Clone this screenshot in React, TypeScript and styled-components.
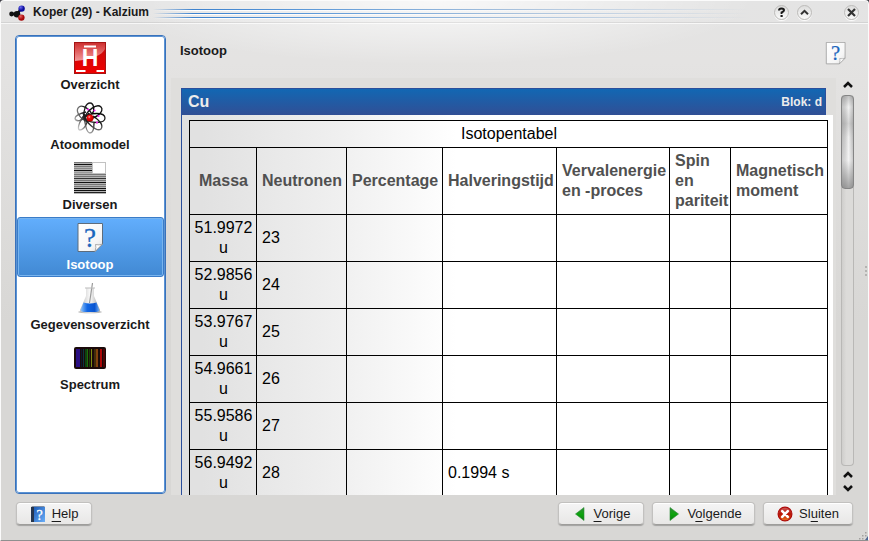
import React from "react";
import styled, { createGlobalStyle, css } from "styled-components";

const GlobalStyle = createGlobalStyle`
  *, *::before, *::after { box-sizing: border-box; }
  body {
    margin: 0;
    font-family: "Liberation Sans", Arial, sans-serif;
    font-size: 13px;
    color: #1a1a1a;
  }
  button { font: inherit; color: inherit; }
`;

const Backdrop = styled.div`
  background: #3c3c44;
`;

const Window = styled.div`
  position: relative;
  display: flex;
  flex-direction: column;
  height: 100vh;
  border: 1px solid #fbfbfb;
  border-bottom: 1px solid #8f8f8f;
  border-radius: 4px 4px 0 0;
  background:
    radial-gradient(ellipse 320px 64px at 50% 0, rgba(255, 255, 255, 0.75), rgba(255, 255, 255, 0)),
    linear-gradient(#e4e4e4 0, #e4e3e2 60px, #d8d7d5 320px);
`;

const TitleBar = styled.header`
  display: flex;
  align-items: center;
  flex: none;
  height: 23px;
  padding: 0 9px 0 8px;
  border-bottom: 1px solid rgba(255, 255, 255, 0.7);
  box-shadow: inset 0 -1px 0 rgba(0, 0, 0, 0.07);
`;

const WindowTitle = styled.h1`
  margin: 0 4px 0 7px;
  font-size: 12px;
  line-height: 16px;
  font-weight: bold;
  white-space: nowrap;
`;

const TitleLines = styled.div`
  flex: 1;
  display: flex;
  flex-direction: column;
  gap: 2px;
  margin-right: 24px;
  padding-top: 4px;
`;

const TitleLine = styled.div`
  height: 2px;
  background:
    linear-gradient(90deg, rgba(61, 130, 206, 0), #3d82ce 40px, #5b98d8 25%, #a6c0dc 60%, rgba(180, 195, 215, 0)) 0 0 / 100% 1px no-repeat,
    linear-gradient(90deg, rgba(255, 255, 255, 0), #ffffff 40px, rgba(255, 255, 255, 0)) 0 1px / 100% 1px no-repeat;
`;

const TitleButtons = styled.div`
  display: flex;
  gap: 8px;
`;

const RoundButton = styled.button<{ $apart?: boolean }>`
  display: grid;
  place-items: center;
  width: 15px;
  height: 15px;
  margin-left: ${(p) => (p.$apart ? "24px" : "0")};
  padding: 0;
  border: 1px solid #bcbbb9;
  border-radius: 50%;
  background: linear-gradient(#dddddc, #fafafa);
  box-shadow: 0 1px 1px #ffffff;
`;

const Main = styled.main`
  display: flex;
  flex: 1;
  min-height: 0;
  padding: 11px 14px 0;
`;

const Sidebar = styled.nav`
  flex: none;
  width: 151px;
  margin-bottom: 1px;
  border: 1px solid #3972bb;
  outline: 1px solid #5b93d4;
  outline-offset: -2px;
  border-radius: 4px;
  padding: 1px;
  background: #ffffff;
`;

const SideItem = styled.button<{ $active?: boolean }>`
  display: flex;
  flex-direction: column;
  align-items: center;
  gap: 3px;
  width: 100%;
  height: 60px;
  padding: 4px 1px 4px 0;
  border: 1px solid transparent;
  border-radius: 3px;
  background: transparent;
  font-weight: bold;
  line-height: 15px;
  ${(p) =>
    p.$active &&
    css`
      color: #ffffff;
      border-color: #3a7cc8;
      background: linear-gradient(#62aefd, #4189d3);
      box-shadow: inset 0 0 0 1px #78b4ee;
    `}
`;

const Page = styled.section`
  display: flex;
  flex-direction: column;
  flex: 1;
  min-width: 0;
  margin-left: 5px;
`;

const PageHeader = styled.div`
  display: flex;
  justify-content: space-between;
  flex: none;
  height: 43px;
  padding: 7px 7px 0 9px;
`;

const PageTitle = styled.h2`
  margin: 0;
  font-size: 13px;
  line-height: 17px;
`;

const ScrollArea = styled.div`
  display: flex;
  flex: 1;
  min-height: 0;
`;

const Viewport = styled.div`
  flex: 1;
  min-width: 0;
  overflow: hidden;
  padding: 10px 3px 0 10px;
  background: #dfdedc;
`;

const Banner = styled.div`
  display: flex;
  align-items: center;
  justify-content: space-between;
  height: 27px;
  margin-right: 7px;
  padding: 0 3px 0 6px;
  border: 1px solid #2b4f9c;
  border-bottom: 0;
  background: linear-gradient(#1267b3, #314f95);
  color: #ececec;
  font-weight: bold;
`;

const ElementSymbol = styled.span`
  font-size: 16px;
  line-height: 20px;
`;

const Block = styled.span`
  font-size: 12px;
  line-height: 16px;
`;

const Sheet = styled.div`
  border-left: 1px solid #2b4f9c;
  padding: 5px 5px 0 7px;
  background: linear-gradient(90deg, #e1e1e1 20px, #f0f0f0 160px, #ffffff 275px);
`;

const IsotopeTable = styled.table`
  width: 100%;
  table-layout: fixed;
  border-collapse: collapse;
  font-size: 16px;
  line-height: 20px;
  color: #000000;
`;

const Col = styled.col<{ $w?: number }>`
  width: ${(p) => (p.$w ? `${p.$w}px` : "auto")};
`;

const cell = css`
  padding: 3px 3px 3px 5px;
  border: 1px solid #000000;
  vertical-align: middle;
`;

const centredCell = css`
  padding-left: 4px;
  text-align: center;
`;

const Caption = styled.th`
  ${cell}
  ${centredCell}
  font-weight: normal;
`;

const Heading = styled.th<{ $center?: boolean }>`
  ${cell}
  color: #505050;
  text-align: left;
  ${(p) => p.$center && centredCell}
`;

const Cell = styled.td<{ $center?: boolean }>`
  ${cell}
  ${(p) => p.$center && centredCell}
`;

const ScrollBar = styled.div`
  display: flex;
  flex-direction: column;
  flex: none;
  width: 13px;
  margin-left: 5px;
  padding-bottom: 1px;
`;

const ScrollArrow = styled.button`
  display: grid;
  place-items: center;
  flex: none;
  height: 13px;
  padding: 0;
  border: 0;
  background: transparent;
`;

const Track = styled.div`
  flex: 1;
  margin: 4px 0 2px;
  border: 1px solid #b9b8b6;
  border-top: 0;
  border-radius: 4px;
  background: linear-gradient(90deg, #cfcecc, #dcdbd9 40%, #dcdbd9);
`;

const Thumb = styled.div`
  height: 94px;
  margin: 0 -1px;
  border: 1px solid #858585;
  border-radius: 4px;
  background:
    linear-gradient(rgba(150, 150, 150, 0.5), rgba(255, 255, 255, 0.2) 12%, rgba(150, 150, 150, 0.3) 30%, rgba(255, 255, 255, 0.1) 45%, rgba(255, 255, 255, 0.3) 70%, rgba(130, 130, 130, 0.7)),
    linear-gradient(90deg, #b4b4b4, #c8c8c8 30%, #eeeeee 60%, #b4b4b4);
`;

const Footer = styled.footer`
  display: flex;
  align-items: flex-start;
  flex: none;
  gap: 8px;
  height: 45px;
  padding: 7px 15px 0;
`;

const PushButton = styled.button<{ $w: number; $first?: boolean }>`
  display: flex;
  align-items: center;
  justify-content: center;
  gap: 6px;
  min-width: ${(p) => p.$w}px;
  height: 23px;
  margin-right: ${(p) => (p.$first ? "auto" : "0")};
  padding: 0;
  border: 1px solid #c2c1bf;
  border-bottom-color: #9e9d9b;
  border-radius: 4px;
  background: linear-gradient(#f5f5f5, #e8e7e6);
  box-shadow: 0 1px 1px rgba(0, 0, 0, 0.25), inset 0 1px 0 #ffffff;
  line-height: 16px;
`;

const Mnemonic = styled.span`
  text-decoration: underline;
  text-decoration-thickness: 1px;
  text-underline-offset: 3px;
`;

const CornerGrip = styled.svg`
  position: absolute;
  right: 0;
  bottom: 0;
`;

const EdgeGrip = styled.svg`
  position: absolute;
  right: 0;
  top: 50%;
  transform: translateY(-50%);
`;

const Chevron = ({ down }: { down?: boolean }) => (
  <svg width="12" height="8" viewBox="0 0 12 8" aria-hidden="true">
    <path d={down ? "M2 2 L6 6 L10 2" : "M2 6 L6 2 L10 6"} fill="none" stroke="#111" strokeWidth="2.5" />
  </svg>
);

const MoleculeIcon = () => (
  <svg width="17" height="17" viewBox="0 0 17 17" aria-hidden="true">
    <defs>
      <radialGradient id="molBlue" cx=".35" cy=".3"><stop offset="0" stopColor="#6a6af0" /><stop offset="1" stopColor="#0c0c9c" /></radialGradient>
      <radialGradient id="molRed" cx=".35" cy=".3"><stop offset="0" stopColor="#e86060" /><stop offset="1" stopColor="#a80808" /></radialGradient>
    </defs>
    <path d="M3 10 L8 10 L12 5 M8 10 L12 14" stroke="#111" strokeWidth="2.4" fill="none" />
    <circle cx="2.600" cy="10" r="2.400" fill="#111" />
    <circle cx="8" cy="10.300" r="3.300" fill="#111" />
    <circle cx="12.600" cy="4.600" r="3.200" fill="url(#molBlue)" />
    <circle cx="12.400" cy="13.600" r="3.200" fill="url(#molRed)" />
  </svg>
);

const OverviewIcon = () => (
  <svg width="32" height="32" viewBox="0 0 32 32" aria-hidden="true">
    <defs>
      <linearGradient id="ovRed" x1="0" y1="0" x2="0" y2="1"><stop offset="0" stopColor="#c40d0d" /><stop offset="1" stopColor="#ef0000" /></linearGradient>
      <linearGradient id="ovGloss" x1="0" y1="0" x2="0" y2="1"><stop offset="0" stopColor="#fff" stopOpacity=".15" /><stop offset="1" stopColor="#fff" stopOpacity=".6" /></linearGradient>
    </defs>
    <rect x=".5" y=".5" width="31" height="31" fill="url(#ovRed)" stroke="#a51515" />
    <path d="M1 1 H31 V7 Q27 16 1 19 Z" fill="url(#ovGloss)" />
    <path d="M10 4.500 H22 M2 29 H11.500 M22.500 29 H30" stroke="#fff" strokeWidth="2" />
    <text x="16" y="24" textAnchor="middle" fontFamily="Liberation Sans, sans-serif" fontWeight="bold" fontSize="23" fill="#fff">H</text>
  </svg>
);

const AtomIcon = () => (
  <svg width="32" height="32" viewBox="0 0 32 32" aria-hidden="true">
    <defs>
      <radialGradient id="atFade" gradientUnits="userSpaceOnUse" cx="22" cy="10" r="24"><stop offset="0" stopColor="#000" /><stop offset=".55" stopColor="#222" /><stop offset="1" stopColor="#c4c4c4" /></radialGradient>
      <radialGradient id="atCore" cx=".4" cy=".35"><stop offset="0" stopColor="#ffc0c0" /><stop offset=".4" stopColor="#f01010" /><stop offset="1" stopColor="#cc0000" /></radialGradient>
    </defs>
    <g fill="none" stroke="url(#atFade)" strokeWidth="1.300">
      <path d="M9 16 C16 10 31 10 31 16 C31 22 16 22 9 16" />
      <path d="M10 17 C13 8 23 1 27 5 C31 9 22 18 10 17" />
      <path d="M10 16 C9 8 12 1 16 1 C20 1 21 9 18 12" />
      <path d="M14 20 C5 17 1 8 5 5 C9 2 16 8 18 12" />
      <path d="M12 10 C4 12 1 14 1 16.500 C2 20 9 20 15 11" />
      <path d="M11 12 C4 21 3 28 6 28 C10 28 15 20 15 11" />
      <path d="M10 12 C11 24 13 31 16 31 C20 31 20 25 20 21" />
      <path d="M9 11 C12 22 23 30 27 27 C30 23 25 18 19 14" />
    </g>
    <circle cx="16" cy="16" r="3.500" fill="url(#atCore)" />
    <g fill="#f020f0"><circle cx="14" cy="7.500" r="1.100" /><circle cx="20.500" cy="8.500" r="1.100" /><circle cx="24.500" cy="14" r="1.100" /><circle cx="23" cy="20.500" r="1.100" /></g>
  </svg>
);

const lineShades = ["#777", "#111", "#777", "#888", "#111", "#999", "#777", "#777", "#333", "#777", "#111", "#777", "#777", "#111", "#111", "#222"];

const MiscIcon = () => (
  <svg width="32" height="32" viewBox="0 0 32 32" aria-hidden="true" shapeRendering="crispEdges">
    <rect width="32" height="32" fill="#b4b4b4" />
    {lineShades.map((shade, i) => (
      <rect key={i} y={i * 2} width="32" height="1" fill={shade} />
    ))}
    <rect x="18" y="0" width="14" height="12" fill="#c2c2c2" />
    <rect x="19" y="1" width="12" height="10" fill="#fff" />
  </svg>
);

const IsotopeIcon = ({ size = 32, outline = "#5d6c7c" }: { size?: number; outline?: string }) => (
  <svg width={size} height={size} viewBox={size === 32 ? "0 0 32 32" : "3 1 26 30"} aria-hidden="true">
    <defs>
      <linearGradient id="isoPaper" x1="0" y1="0" x2="1" y2="1"><stop offset="0" stopColor="#fff" /><stop offset=".7" stopColor="#f6f6f6" /><stop offset="1" stopColor="#ddd" /></linearGradient>
    </defs>
    <path d="M4 1.500 H28.500 V22 L21 29.500 H4 Z" fill="url(#isoPaper)" stroke={outline} />
    <path d="M21 29.500 Q22.500 25 21.500 22.500 Q25 23.500 28.500 22 Z" fill="#fff" stroke="#999" strokeWidth=".8" />
    <text x="16" y="24.500" textAnchor="middle" fontFamily="Liberation Serif, serif" fontWeight="normal" fontSize="27" fill="#1b66bd" stroke="#1b66bd" strokeWidth=".3">?</text>
  </svg>
);

const FlaskIcon = () => (
  <svg width="32" height="32" viewBox="0 0 32 32" aria-hidden="true">
    <defs>
      <linearGradient id="flLiquid" x1="0" y1="0" x2="1" y2="0"><stop offset="0" stopColor="#8ec4fa" /><stop offset=".35" stopColor="#1267e4" /><stop offset=".75" stopColor="#0a55d0" /><stop offset="1" stopColor="#70aef4" /></linearGradient>
      <linearGradient id="flGlass" x1="0" y1="0" x2="1" y2="0"><stop offset="0" stopColor="#bbb" /><stop offset=".5" stopColor="#fafafa" /><stop offset="1" stopColor="#a5a5a5" /></linearGradient>
    </defs>
    <ellipse cx="16" cy="30" rx="12" ry="1.300" fill="#b9b9b9" />
    <path d="M12 6 H20 V14 L26 28 Q26 30.500 23 30.500 H9 Q6 30.500 6 28 L12 14 Z" fill="url(#flGlass)" />
    <path d="M9.500 20.500 Q16 22.500 22.500 20.500 L25.300 28 Q25 30 22.500 30 H9.500 Q7 30 6.700 28 Z" fill="url(#flLiquid)" />
    <path d="M18.500 1 L15.500 21" stroke="#999" strokeWidth="1.200" />
    <path d="M11 6 H21" stroke="#bbb" />
  </svg>
);

const spectrumLines: [number, number, string][] = [
  [2, 4, "#2b0f82"], [7, 1, "#071a2e"], [9, 1, "#0c3540"], [11, 2, "#0c430f"], [13, 1, "#226b0b"], [15, 1, "#163e08"],
  [17, 1, "#7d8c10"], [20, 2, "#3f2c0a"], [22, 2, "#81420c"], [26, 2, "#ac0707"], [29, 2, "#4a0404"],
];

const SpectrumIcon = () => (
  <svg width="32" height="32" viewBox="0 0 32 32" aria-hidden="true">
    <rect x="0" y="5" width="32" height="22" rx="2" fill="#1a0a0a" />
    {spectrumLines.map(([x, w, fill]) => (
      <rect key={x} x={x} y="7" width={w} height="18" fill={fill} />
    ))}
  </svg>
);

const HelpBookIcon = () => (
  <svg width="16" height="16" viewBox="0 0 16 16" aria-hidden="true">
    <defs>
      <linearGradient id="bookBlue" x1="0" y1="0" x2="1" y2="1"><stop offset="0" stopColor="#1c5cb8" /><stop offset="1" stopColor="#6aaef8" /></linearGradient>
    </defs>
    <path d="M1 1 L4 0 V16 H1 Z" fill="#26364e" />
    <rect x="4" y="1" width="11" height="15" fill="url(#bookBlue)" />
    <path d="M3 .5 H14.500" stroke="#7e8ea4" />
    <text x="9.500" y="13.500" textAnchor="middle" fontFamily="Liberation Serif, serif" fontSize="14" fill="#fff" stroke="#fff" strokeWidth=".3">?</text>
  </svg>
);

const ArrowIcon = ({ right }: { right?: boolean }) => (
  <svg width="16" height="16" viewBox="0 0 16 16" aria-hidden="true">
    <defs>
      <linearGradient id="arrowGreen" x1="0" y1="0" x2="0" y2="1"><stop offset="0" stopColor="#2f8f35" /><stop offset=".55" stopColor="#0ba30b" /><stop offset="1" stopColor="#0c7d12" /></linearGradient>
    </defs>
    <path d={right ? "M5 1.500 L13.500 8 L5 14.500 Z" : "M12 1.500 L3.500 8 L12 14.500 Z"} fill="url(#arrowGreen)" stroke="#2c8a35" strokeWidth=".6" />
  </svg>
);

const CloseIcon = () => (
  <svg width="16" height="16" viewBox="0 0 16 16" aria-hidden="true">
    <defs>
      <linearGradient id="closeRed" x1="0" y1="0" x2="0" y2="1"><stop offset="0" stopColor="#d06060" /><stop offset=".5" stopColor="#b81000" /><stop offset="1" stopColor="#ee7a20" /></linearGradient>
    </defs>
    <circle cx="8" cy="8" r="6.900" fill="url(#closeRed)" stroke="#ad0b0b" strokeWidth="1.200" />
    <path d="M5.200 5.200 L10.800 10.800 M10.800 5.200 L5.200 10.800" stroke="#fff" strokeWidth="2.600" strokeLinecap="round" />
  </svg>
);

const pages = [
  { label: "Overzicht", icon: <OverviewIcon /> },
  { label: "Atoommodel", icon: <AtomIcon /> },
  { label: "Diversen", icon: <MiscIcon /> },
  { label: "Isotoop", icon: <IsotopeIcon /> },
  { label: "Gegevensoverzicht", icon: <FlaskIcon /> },
  { label: "Spectrum", icon: <SpectrumIcon /> },
];

const columns = [
  { label: "Massa", width: 67 },
  { label: "Neutronen", width: 90 },
  { label: "Percentage", width: 96 },
  { label: "Halveringstijd", width: 114 },
  { label: "Vervalenergie en -proces", width: 113 },
  { label: "Spin en pariteit", width: 61 },
  { label: "Magnetisch moment" },
];

const isotopes = [
  ["51.9972 u", "23", "", "", "", "", ""],
  ["52.9856 u", "24", "", "", "", "", ""],
  ["53.9767 u", "25", "", "", "", "", ""],
  ["54.9661 u", "26", "", "", "", "", ""],
  ["55.9586 u", "27", "", "", "", "", ""],
  ["56.9492 u", "28", "", "0.1994 s", "", "", ""],
];

export default function App() {
  const [active, setActive] = React.useState("Isotoop");
  return (
    <Backdrop>
      <GlobalStyle />
      <Window>
        <TitleBar>
          <MoleculeIcon />
          <WindowTitle>Koper (29) - Kalzium</WindowTitle>
          <TitleLines aria-hidden="true">
            <TitleLine />
            <TitleLine />
            <TitleLine />
          </TitleLines>
          <TitleButtons>
            <RoundButton aria-label="Help">
              <svg width="9" height="11" viewBox="0 0 9 11" aria-hidden="true">
                <path d="M2 3.500 Q2 1.500 4.500 1.500 Q7 1.500 7 3.300 Q7 4.600 4.600 5.500 V7" fill="none" stroke="#1a1a1a" strokeWidth="2" />
                <rect x="3.500" y="8" width="2.200" height="2" fill="#1a1a1a" />
              </svg>
            </RoundButton>
            <RoundButton aria-label="Oprollen">
              <svg width="9" height="9" viewBox="0 0 9 9" aria-hidden="true">
                <path d="M1 6.200 L4.500 2.800 L8 6.200" fill="none" stroke="#333" strokeWidth="2" />
              </svg>
            </RoundButton>
            <RoundButton aria-label="Venster sluiten" $apart>
              <svg width="9" height="9" viewBox="0 0 9 9" aria-hidden="true">
                <path d="M1 1 L8 8 M8 1 L1 8" fill="none" stroke="#333" strokeWidth="2.200" />
              </svg>
            </RoundButton>
          </TitleButtons>
        </TitleBar>
        <Main>
          <Sidebar>
            {pages.map((page) => (
              <SideItem key={page.label} $active={page.label === active} onClick={() => setActive(page.label)}>
                {page.icon}
                <span>{page.label}</span>
              </SideItem>
            ))}
          </Sidebar>
          <Page>
            <PageHeader>
              <PageTitle>Isotoop</PageTitle>
              <IsotopeIcon size={23} outline="#999999" />
            </PageHeader>
            <ScrollArea>
              <Viewport>
                <Banner>
                  <ElementSymbol>Cu</ElementSymbol>
                  <Block>Blok: d</Block>
                </Banner>
                <Sheet>
                  <IsotopeTable>
                    <colgroup>
                      {columns.map((c) => (
                        <Col key={c.label} $w={c.width} />
                      ))}
                    </colgroup>
                    <thead>
                      <tr>
                        <Caption colSpan={7}>Isotopentabel</Caption>
                      </tr>
                      <tr>
                        {columns.map((c, i) => (
                          <Heading key={c.label} scope="col" $center={i === 0}>
                            {c.label}
                          </Heading>
                        ))}
                      </tr>
                    </thead>
                    <tbody>
                      {isotopes.map((row) => (
                        <tr key={row[0]}>
                          {row.map((value, i) => (
                            <Cell key={i} $center={i === 0}>
                              {value}
                            </Cell>
                          ))}
                        </tr>
                      ))}
                    </tbody>
                  </IsotopeTable>
                </Sheet>
              </Viewport>
              <ScrollBar>
                <ScrollArrow aria-label="Omhoog"><Chevron /></ScrollArrow>
                <Track>
                  <Thumb />
                </Track>
                <ScrollArrow aria-label="Omhoog"><Chevron /></ScrollArrow>
                <ScrollArrow aria-label="Omlaag"><Chevron down /></ScrollArrow>
              </ScrollBar>
            </ScrollArea>
          </Page>
        </Main>
        <Footer>
          <PushButton $w={76} $first>
            <HelpBookIcon />
            <span><Mnemonic>H</Mnemonic>elp</span>
          </PushButton>
          <PushButton $w={86}>
            <ArrowIcon />
            <span><Mnemonic>V</Mnemonic>orige</span>
          </PushButton>
          <PushButton $w={103}>
            <ArrowIcon right />
            <span>V<Mnemonic>o</Mnemonic>lgende</span>
          </PushButton>
          <PushButton $w={90}>
            <CloseIcon />
            <span>Sl<Mnemonic>u</Mnemonic>iten</span>
          </PushButton>
        </Footer>
        <EdgeGrip width="4" height="12" viewBox="0 0 4 12" aria-hidden="true">
          <path d="M1 1 h2 v2 h-2 z M1 5 h2 v2 h-2 z M1 9 h2 v2 h-2 z" fill="#b4b3b1" />
        </EdgeGrip>
        <CornerGrip width="9" height="8" viewBox="0 0 9 8" aria-hidden="true">
          <path d="M6 0 h1.500 v1.500 h-1.500 z M3 3 h1.500 v1.500 h-1.500 z M6 3 h1.500 v1.500 h-1.500 z M0 6 h1.500 v1.500 h-1.500 z M3 6 h1.500 v1.500 h-1.500 z" fill="#a2a19f" />
          <path d="M9 4 V8 H6 Z" fill="#4f6694" />
        </CornerGrip>
      </Window>
    </Backdrop>
  );
}
